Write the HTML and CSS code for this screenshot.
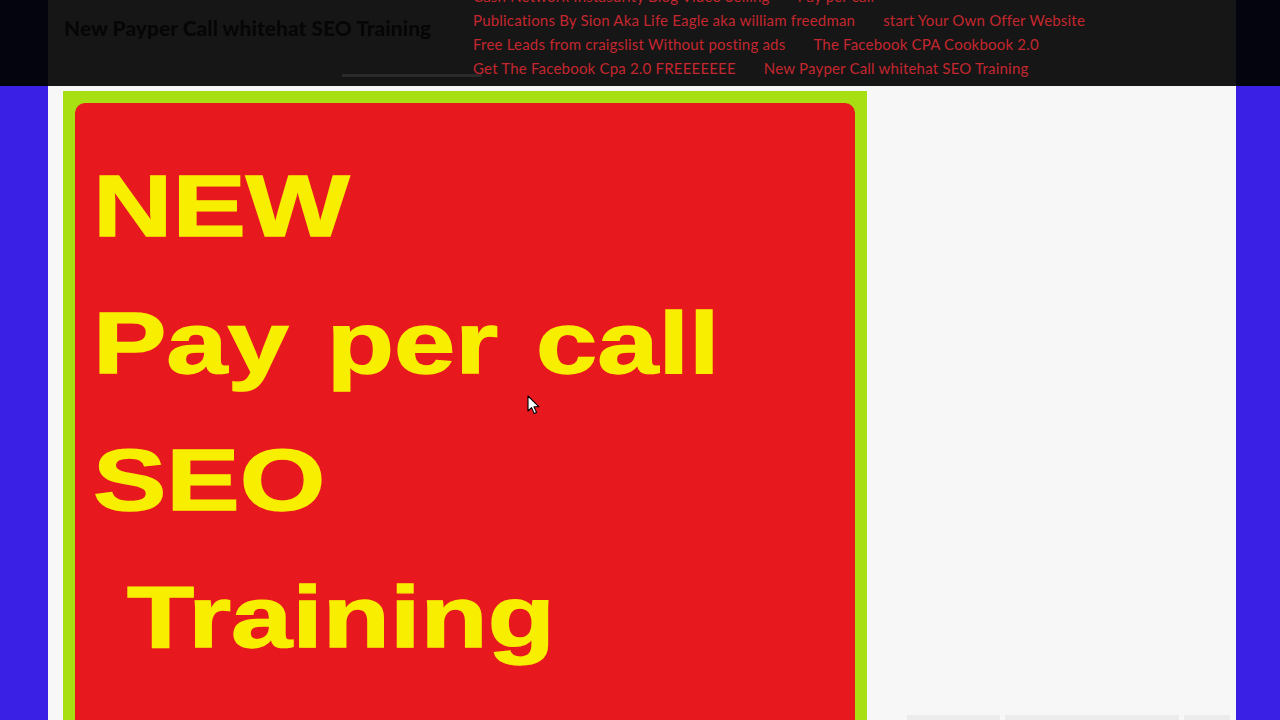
FILE: index.html
```html
<!DOCTYPE html>
<html lang="en">
<head>
<meta charset="utf-8">
<title>New Payper Call whitehat SEO Training</title>
<link rel="stylesheet" href="styles.css">
</head>
<body>
<header class="topbar">
  <div class="topbar-inner">
    <div class="brand">
      <h1 class="site-title">New Payper Call whitehat SEO Training</h1>
      <div class="brand-line"></div>
    </div>
    <nav class="nav">
      <div class="nav-row"><a>Cash Network Instasurity Blog Video Selling</a><a>Pay per call</a></div>
      <div class="nav-row"><a>Publications By Sion Aka Life Eagle aka william freedman</a><a>start Your Own Offer Website</a></div>
      <div class="nav-row"><a>Free Leads from craigslist Without posting ads</a><a>The Facebook CPA Cookbook 2.0</a></div>
      <div class="nav-row"><a>Get The Facebook Cpa 2.0 FREEEEEEE</a><a>New Payper Call whitehat SEO Training</a></div>
    </nav>
  </div>
</header>
<main class="page">
  <div class="content">
    <div class="banner">
      <div class="banner-red">
        <p class="banner-line">NEW</p>
        <p class="banner-line">Pay per call</p>
        <p class="banner-line">SEO</p>
        <p class="banner-line banner-indent">&nbsp;Training</p>
      </div>
    </div>
    <aside class="sidebar">
      <div class="side-tabs">
        <span class="tab tab-a"></span>
        <span class="tab tab-b"></span>
        <span class="tab tab-c"></span>
      </div>
    </aside>
  </div>
</main>
<svg class="cursor" width="14" height="21" viewBox="0 0 14 21" aria-hidden="true">
  <path d="M1 1 L1 16 L4.6 12.6 L7.2 18.6 L9.6 17.6 L7 11.8 L12 11.8 Z" fill="#ffffff" stroke="#000000" stroke-width="1.1" stroke-linejoin="round"/>
</svg>
</body>
</html>
```

FILE: styles.css
```css
html, body {
  margin: 0;
  padding: 0;
  height: 720px;
  overflow: hidden;
}

body {
  background: #3a1fe4;
  font-family: "Lato", "Liberation Sans", sans-serif;
  position: relative;
}

.topbar {
  background: #04040f;
  height: 86px;
  overflow: hidden;
}

.topbar-inner {
  width: 1188px;
  height: 86px;
  margin-left: 48px;
  background: #161616;
  display: flex;
  overflow: hidden;
}

.brand {
  width: 425px;
  flex: none;
  display: flex;
  flex-direction: column;
}

.site-title {
  margin: 15px 0 0 16px;
  font-family: "Lato", "Liberation Sans", sans-serif;
  font-weight: 900;
  font-size: 21px;
  line-height: 26px;
  color: #060606;
  white-space: nowrap;
  filter: blur(0.7px);
}

.brand-line {
  margin: 33px 0 0 294px;
  width: 140px;
  height: 3px;
  background: #2a2a2a;
}

.nav {
  margin-top: -16px;
  display: flex;
  flex-direction: column;
}

.nav-row {
  display: flex;
  gap: 28px;
  height: 24px;
  align-items: center;
}

.nav-row a {
  color: #c3272f;
  font-size: 15px;
  letter-spacing: 0.2px;
  white-space: nowrap;
}

.page {
  width: 1188px;
  margin-left: 48px;
  background: #f7f7f7;
  height: 634px;
  overflow: hidden;
}

.content {
  display: flex;
  padding: 5px 0 0 15px;
}

.banner {
  width: 780px;
  flex: none;
  background: #a8df12;
  padding: 12px 12px 0;
}

.banner-red {
  background: #e8181f;
  border-radius: 10px 10px 0 0;
  height: 700px;
  padding: 34px 0 0 18px;
  box-sizing: border-box;
  overflow: hidden;
}

.banner-line {
  margin: 0;
  font-family: "Liberation Sans", Arial, sans-serif;
  font-weight: 700;
  font-size: 88px;
  line-height: 137px;
  word-spacing: 6px;
  color: #f8ef00;
  -webkit-text-stroke: 1.4px #f8ef00;
  white-space: nowrap;
  transform: scaleX(1.25);
  transform-origin: left center;
}

.banner-indent {
  margin-left: -4px;
}

.sidebar {
  flex: 1;
  padding: 624px 0 0 40px;
}

.side-tabs {
  display: flex;
  gap: 5px;
}

.tab {
  height: 8px;
  background: #ececec;
  display: block;
}

.tab-a { width: 93px; }
.tab-b { width: 174px; }
.tab-c { width: 46px; }

.cursor {
  position: absolute;
  left: 527px;
  top: 395px;
}
```
